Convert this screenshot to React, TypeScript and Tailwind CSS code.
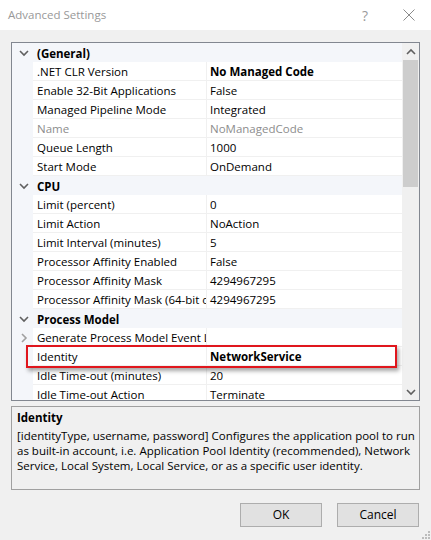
import { ReactElement } from "react";

type Row =
  | { kind: "cat"; label: string }
  | { kind: "prop"; name: string; value: string; bold?: boolean; dim?: boolean; expandable?: boolean };

const rows: Row[] = [
  { kind: "cat", label: "(General)" },
  { kind: "prop", name: ".NET CLR Version", value: "No Managed Code", bold: true },
  { kind: "prop", name: "Enable 32-Bit Applications", value: "False" },
  { kind: "prop", name: "Managed Pipeline Mode", value: "Integrated" },
  { kind: "prop", name: "Name", value: "NoManagedCode", dim: true },
  { kind: "prop", name: "Queue Length", value: "1000" },
  { kind: "prop", name: "Start Mode", value: "OnDemand" },
  { kind: "cat", label: "CPU" },
  { kind: "prop", name: "Limit (percent)", value: "0" },
  { kind: "prop", name: "Limit Action", value: "NoAction" },
  { kind: "prop", name: "Limit Interval (minutes)", value: "5" },
  { kind: "prop", name: "Processor Affinity Enabled", value: "False" },
  { kind: "prop", name: "Processor Affinity Mask", value: "4294967295" },
  { kind: "prop", name: "Processor Affinity Mask (64-bit option)", value: "4294967295" },
  { kind: "cat", label: "Process Model" },
  { kind: "prop", name: "Generate Process Model Event Log Entry", value: "", expandable: true },
  { kind: "prop", name: "Identity", value: "NetworkService", bold: true },
  { kind: "prop", name: "Idle Time-out (minutes)", value: "20" },
  { kind: "prop", name: "Idle Time-out Action", value: "Terminate" },
];

function Chevron({ dir }: { dir: "down" | "right" | "up" }) {
  const d =
    dir === "down" ? "M1 3 L5 7 L9 3" : dir === "up" ? "M1 7 L5 3 L9 7" : "M3 1 L7 5 L3 9";
  return (
    <svg width="10" height="10" viewBox="0 0 10 10" fill="none">
      <path d={d} stroke={dir === "right" ? "#a0a0a0" : "#606060"} strokeWidth="1.6" />
    </svg>
  );
}

function GridRow({ row }: { row: Row }): ReactElement {
  if (row.kind === "cat") {
    return (
      <div className="flex h-[19px] items-center bg-[#f4f6fa]">
        <div className="flex w-[21px] justify-center pl-[2px] pt-[1px]">
          <Chevron dir="down" />
        </div>
        <div className="pl-[4px] pt-[2px] font-bold text-black">{row.label}</div>
      </div>
    );
  }
  return (
    <div className="flex h-[19px]">
      <div className="flex w-[21px] items-center justify-center bg-[#f4f6fa] pl-[2px] pt-[1px]">
        {row.expandable && <Chevron dir="right" />}
      </div>
      <div
        className={`w-[174px] overflow-hidden whitespace-nowrap border-b border-r border-[#f0f0f0] bg-white pl-[4px] leading-[20px] ${
          row.dim ? "text-[#8d8d8d]" : "text-black"
        }`}
      >
        {row.name}
      </div>
      <div
        className={`flex-1 overflow-hidden whitespace-nowrap border-b border-[#f0f0f0] bg-white pl-[3px] leading-[20px] ${
          row.dim ? "text-[#8d8d8d]" : "text-black"
        } ${row.bold ? "font-bold" : ""}`}
      >
        {row.value}
      </div>
    </div>
  );
}

export default function App() {
  return (
    <div
      className="relative h-[540px] w-[431px] overflow-hidden bg-[#f0f0f0] text-[11.5px]"
      style={{ fontFamily: '"Segoe UI", "Open Sans", sans-serif' }}
    >
      {/* title bar */}
      <div className="flex h-[30px] items-center bg-white pl-[8px]">
        <span className="text-[11.5px] text-[#999999]">Advanced Settings</span>
        <span className="ml-auto mr-[35px] text-[14px] text-[#9a9a9a]">?</span>
        <svg width="12" height="12" viewBox="0 0 12 12" className="mr-[16px]">
          <path d="M0.5 0.5 L11.5 11.5 M11.5 0.5 L0.5 11.5" stroke="#8a8a8a" strokeWidth="1" />
        </svg>
      </div>

      <div className="px-[11px] pt-[12px]">
        {/* property grid */}
        <div className="relative flex h-[359px] border border-[#828790] bg-white">
          <div className="flex-1 overflow-hidden">
            {rows.map((r, i) => (
              <GridRow key={i} row={r} />
            ))}
          </div>
          <div className="flex w-[17px] flex-col bg-[#f0f0f0]">
            <div className="flex h-[17px] items-center justify-center">
              <Chevron dir="up" />
            </div>
            <div className="mx-[1px] h-[127px] bg-[#cdcdcd]" />
            <div className="flex-1" />
            <div className="flex h-[17px] items-center justify-center">
              <Chevron dir="down" />
            </div>
          </div>

          {/* highlight on the Identity row */}
          <div className="pointer-events-none absolute left-[14px] top-[302px] h-[23px] w-[371px] border-2 border-[#e0161d] shadow-[2px_3px_4px_rgba(0,0,0,0.35)]" />
        </div>

        {/* description */}
        <div className="mt-[5px] h-[84px] border border-[#a0a0a0] px-[5px] pt-[3px] leading-[15px] text-black">
          <div className="font-bold">Identity</div>
          <div className="mt-[3px] whitespace-nowrap">
            [identityType, username, password] Configures the application pool to run
            <br />
            as built-in account, i.e. Application Pool Identity (recommended), Network
            <br />
            Service, Local System, Local Service, or as a specific user identity.
          </div>
        </div>

        {/* buttons */}
        <div className="mt-[13px] flex justify-end gap-[15px] pr-[1px]">
          <button className="h-[24px] w-[82px] border border-[#adadad] bg-[#e1e1e1] text-[12px] text-black">OK</button>
          <button className="h-[24px] w-[82px] border border-[#adadad] bg-[#e1e1e1] text-[12px] text-black">Cancel</button>
        </div>
      </div>

      {/* size grip */}
      <svg width="10" height="10" viewBox="0 0 10 10" className="absolute bottom-[1px] right-[1px]">
        {[
          [8, 2],
          [8, 5],
          [5, 5],
          [8, 8],
          [5, 8],
          [2, 8],
        ].map(([x, y], i) => (
          <rect key={i} x={x} y={y} width="2" height="2" fill="#bcbcbc" />
        ))}
      </svg>
    </div>
  );
}
